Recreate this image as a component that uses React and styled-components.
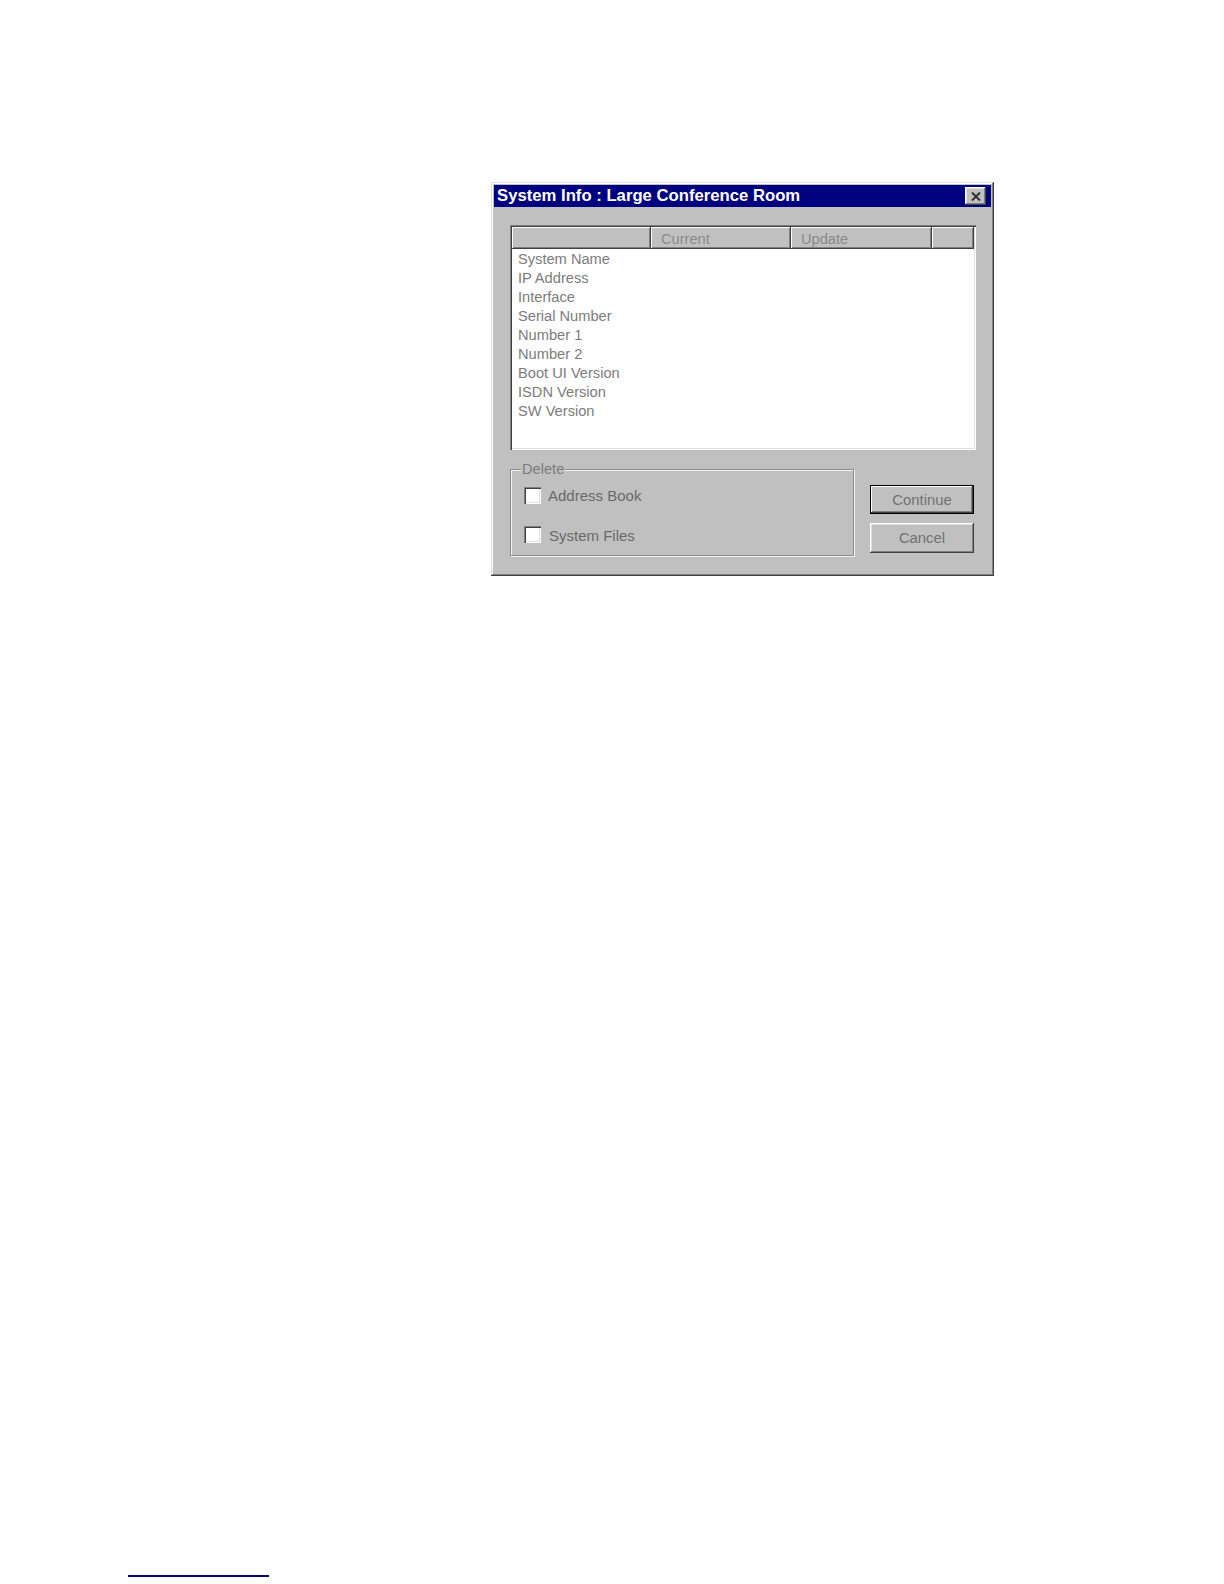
import React from "react";
import styled, { createGlobalStyle } from "styled-components";

const Global = createGlobalStyle`
  html, body { margin: 0; padding: 0; background: #ffffff; }
  * { box-sizing: border-box; }
  body { font-family: "Liberation Sans", Arial, sans-serif; }
`;

const Page = styled.div`
  display: flex;
  flex-direction: column;
  height: 1584px;
  padding-top: 182px;
  background: #ffffff;
`;

const Dialog = styled.div`
  margin-left: 491px;
  width: 503px;
  height: 394px;
  padding: 3px;
  display: flex;
  flex-direction: column;
  background: #c0c0c0;
  box-shadow: inset -1px -1px #404040, inset 1px 1px #dfdfdf,
    inset -2px -2px #808080, inset 2px 2px #ffffff;
`;

const TitleBar = styled.div`
  height: 22px;
  display: flex;
  align-items: center;
  justify-content: space-between;
  padding: 0 5px 0 3px;
  background: #000080;
`;

const TitleText = styled.span`
  color: #ffffff;
  font-weight: bold;
  font-size: 16.7px;
  line-height: 22px;
  white-space: nowrap;
`;

const CloseButton = styled.div`
  width: 21px;
  height: 18px;
  display: flex;
  align-items: center;
  justify-content: center;
  background: #c0c0c0;
  box-shadow: inset -1px -1px #404040, inset 1px 1px #ffffff,
    inset -2px -2px #808080, inset 2px 2px #dfdfdf;
`;

const Body = styled.div`
  flex: 1;
  display: flex;
  flex-direction: column;
  padding: 18px 15px 0 16px;
`;

const List = styled.div`
  height: 225px;
  padding: 2px;
  display: flex;
  flex-direction: column;
  background: #ffffff;
  box-shadow: inset 1px 1px #808080, inset 2px 2px #404040,
    inset -1px -1px #ffffff, inset -2px -2px #dfdfdf;
`;

const Header = styled.div`
  display: grid;
  grid-template-columns: 139px 140px 141px 1fr;
  height: 22px;
`;

const HeaderCell = styled.div`
  padding-left: 10px;
  font-size: 14.65px;
  line-height: 24px;
  color: #8a8a8a;
  background: #c0c0c0;
  box-shadow: inset -1px -1px #404040, inset 1px 1px #ffffff,
    inset -2px -2px #808080;
  overflow: hidden;
  white-space: nowrap;
`;

const Rows = styled.div`
  padding-left: 6px;
  padding-top: 1px;
`;

const Row = styled.div`
  font-size: 14.65px;
  line-height: 19px;
  color: #7c7c7c;
  white-space: nowrap;
`;

const BottomRow = styled.div`
  display: flex;
  align-items: flex-start;
  margin-top: 19px;
`;

const GroupBox = styled.div`
  position: relative;
  width: 344px;
  height: 87px;
  padding: 16px 0 0 13px;
  display: flex;
  flex-direction: column;
  gap: 19.5px;
  border: 1px solid #8c8c8c;
  box-shadow: inset 1px 1px #f4f4f4, 1px 1px #f4f4f4;
`;

const Legend = styled.span`
  position: absolute;
  top: -9px;
  left: 10px;
  padding: 0 1px;
  background: #c0c0c0;
  font-size: 14.65px;
  line-height: 17px;
  color: #7c7c7c;
`;

const CheckRow = styled.label`
  display: flex;
  align-items: center;
  height: 20px;
  gap: ${(p) => p.$gap}px;
`;

const CheckBox = styled.span`
  width: 17px;
  height: 17px;
  margin-top: -2px;
  background: #ffffff;
  box-shadow: inset 1px 1px #808080, inset 2px 2px #404040,
    inset -1px -1px #ffffff, inset -2px -2px #dfdfdf;
`;

const CheckLabel = styled.span`
  font-size: 15px;
  line-height: 20px;
  color: #6a6a6a;
  white-space: nowrap;
`;

const ButtonColumn = styled.div`
  display: flex;
  flex-direction: column;
  gap: 9px;
  margin-left: 16px;
  margin-top: 16px;
`;

const Button = styled.div`
  width: 104px;
  height: ${(p) => (p.$default ? 29 : 30)}px;
  display: flex;
  align-items: center;
  justify-content: center;
  font-size: 14.85px;
  color: #727272;
  background: #c0c0c0;
  box-shadow: ${(p) =>
    p.$default
      ? "inset 0 0 0 1px #000000, inset -2px -2px #404040, inset 2px 2px #ffffff, inset -3px -3px #808080"
      : "inset -1px -1px #404040, inset 1px 1px #ffffff, inset -2px -2px #808080, inset 2px 2px #dfdfdf"};
`;

const FooterRule = styled.div`
  margin-top: auto;
  margin-bottom: 7px;
  margin-left: 128px;
  width: 141px;
  height: 2px;
  background: #000080;
`;

const items = [
  "System Name",
  "IP Address",
  "Interface",
  "Serial Number",
  "Number 1",
  "Number 2",
  "Boot UI Version",
  "ISDN Version",
  "SW Version",
];

export default function App() {
  return (
    <>
      <Global />
      <Page>
        <Dialog>
          <TitleBar>
            <TitleText>System Info : Large Conference Room</TitleText>
            <CloseButton>
              <svg width="10" height="9" viewBox="0 0 10 9">
                <path d="M1 0.5 L9 8.5 M9 0.5 L1 8.5" stroke="#303030" strokeWidth="2" />
              </svg>
            </CloseButton>
          </TitleBar>
          <Body>
            <List>
              <Header>
                <HeaderCell />
                <HeaderCell>Current</HeaderCell>
                <HeaderCell>Update</HeaderCell>
                <HeaderCell />
              </Header>
              <Rows>
                {items.map((t) => (
                  <Row key={t}>{t}</Row>
                ))}
              </Rows>
            </List>
            <BottomRow>
              <GroupBox>
                <Legend>Delete</Legend>
                <CheckRow $gap={7}>
                  <CheckBox />
                  <CheckLabel>Address Book</CheckLabel>
                </CheckRow>
                <CheckRow $gap={8}>
                  <CheckBox />
                  <CheckLabel>System Files</CheckLabel>
                </CheckRow>
              </GroupBox>
              <ButtonColumn>
                <Button $default>Continue</Button>
                <Button>Cancel</Button>
              </ButtonColumn>
            </BottomRow>
          </Body>
        </Dialog>
        <FooterRule />
      </Page>
    </>
  );
}
